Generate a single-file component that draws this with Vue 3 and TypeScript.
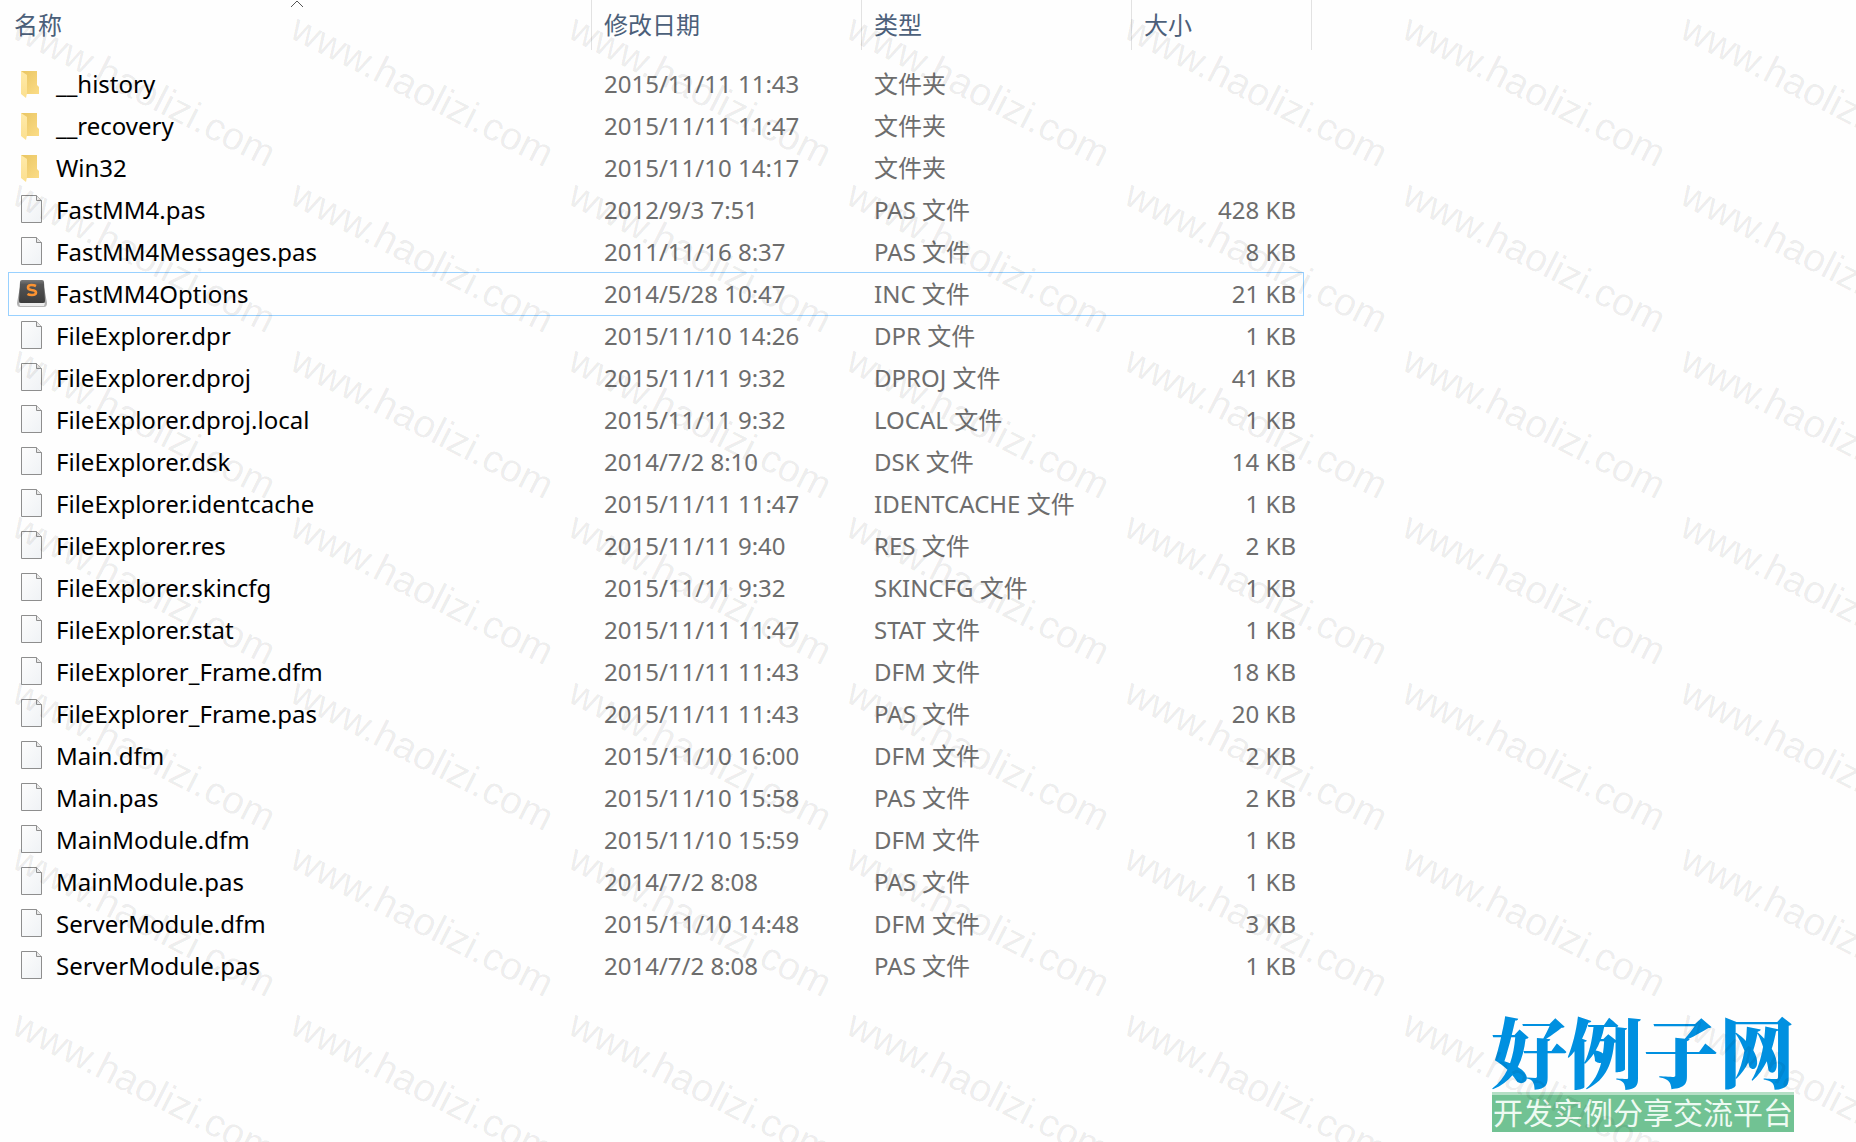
<script setup lang="ts">
type Kind = 'folder' | 'file' | 'sublime'

interface Entry {
  name: string
  date: string
  type: string
  size: string
  kind: Kind
}

function row(name: string, date: string, type: string, size = '', kind: Kind = 'file'): Entry {
  return { name, date, type, size, kind }
}

const entries: Entry[] = [
  row('__history', '2015/11/11 11:43', '文件夹', '', 'folder'),
  row('__recovery', '2015/11/11 11:47', '文件夹', '', 'folder'),
  row('Win32', '2015/11/10 14:17', '文件夹', '', 'folder'),
  row('FastMM4.pas', '2012/9/3 7:51', 'PAS 文件', '428 KB'),
  row('FastMM4Messages.pas', '2011/11/16 8:37', 'PAS 文件', '8 KB'),
  row('FastMM4Options', '2014/5/28 10:47', 'INC 文件', '21 KB', 'sublime'),
  row('FileExplorer.dpr', '2015/11/10 14:26', 'DPR 文件', '1 KB'),
  row('FileExplorer.dproj', '2015/11/11 9:32', 'DPROJ 文件', '41 KB'),
  row('FileExplorer.dproj.local', '2015/11/11 9:32', 'LOCAL 文件', '1 KB'),
  row('FileExplorer.dsk', '2014/7/2 8:10', 'DSK 文件', '14 KB'),
  row('FileExplorer.identcache', '2015/11/11 11:47', 'IDENTCACHE 文件', '1 KB'),
  row('FileExplorer.res', '2015/11/11 9:40', 'RES 文件', '2 KB'),
  row('FileExplorer.skincfg', '2015/11/11 9:32', 'SKINCFG 文件', '1 KB'),
  row('FileExplorer.stat', '2015/11/11 11:47', 'STAT 文件', '1 KB'),
  row('FileExplorer_Frame.dfm', '2015/11/11 11:43', 'DFM 文件', '18 KB'),
  row('FileExplorer_Frame.pas', '2015/11/11 11:43', 'PAS 文件', '20 KB'),
  row('Main.dfm', '2015/11/10 16:00', 'DFM 文件', '2 KB'),
  row('Main.pas', '2015/11/10 15:58', 'PAS 文件', '2 KB'),
  row('MainModule.dfm', '2015/11/10 15:59', 'DFM 文件', '1 KB'),
  row('MainModule.pas', '2014/7/2 8:08', 'PAS 文件', '1 KB'),
  row('ServerModule.dfm', '2015/11/10 14:48', 'DFM 文件', '3 KB'),
  row('ServerModule.pas', '2014/7/2 8:08', 'PAS 文件', '1 KB'),
]

const selected = 'FastMM4Options'
const tiles = 49
</script>

<template>
  <main class="explorer">
    <svg class="defs" width="0" height="0" aria-hidden="true">
      <defs>
        <linearGradient id="folderBack" x1="0" y1="0" x2="1" y2="1">
          <stop offset="0" stop-color="#e9c562" />
          <stop offset="1" stop-color="#fbdc86" />
        </linearGradient>
        <linearGradient id="folderFront" x1="0" y1="0" x2="0" y2="1">
          <stop offset="0" stop-color="#ffeaa9" />
          <stop offset="1" stop-color="#fbdf8f" />
        </linearGradient>
        <linearGradient id="paper" x1="0" y1="0" x2="1" y2="1">
          <stop offset="0" stop-color="#fdfdfd" />
          <stop offset="1" stop-color="#eff2f5" />
        </linearGradient>
        <linearGradient id="keyTop" x1="0" y1="0" x2="0" y2="1">
          <stop offset="0" stop-color="#7a7a7a" />
          <stop offset="0.2" stop-color="#565656" />
          <stop offset="1" stop-color="#3c3c3c" />
        </linearGradient>
        <linearGradient id="keySide" x1="0" y1="0" x2="0" y2="1">
          <stop offset="0" stop-color="#777" />
          <stop offset="1" stop-color="#b9b9b9" />
        </linearGradient>
      </defs>
    </svg>

    <table class="files">
      <colgroup>
        <col class="col-name" />
        <col class="col-mid" />
        <col class="col-mid" />
        <col class="col-size" />
      </colgroup>
      <thead>
        <tr>
          <th scope="col" aria-sort="ascending">
            <button type="button">名称</button>
            <svg class="caret" width="14" height="8" viewBox="0 0 14 8" aria-hidden="true">
              <path d="M1 7 L7 1 L13 7" fill="none" stroke="#555" stroke-width="1" />
            </svg>
          </th>
          <th scope="col"><button type="button">修改日期</button></th>
          <th scope="col"><button type="button">类型</button></th>
          <th scope="col"><button type="button">大小</button></th>
        </tr>
      </thead>
      <tbody>
        <tr v-for="e in entries" :key="e.name" :class="{ selected: e.name === selected }">
          <td class="name">
            <div class="label">
              <svg class="icon" width="32" height="32" viewBox="0 0 32 32" aria-hidden="true">
                <template v-if="e.kind === 'folder'">
                  <path d="M5 5 H21 V19 L23 21 V28 H9 Z" fill="url(#folderBack)" />
                  <path d="M5 5 L11 9 V27 L10 32 L5 28 Z" fill="url(#folderFront)" />
                </template>
                <template v-else-if="e.kind === 'file'">
                  <path d="M5.500 3.500 H20.500 L25.500 8.500 V30.500 H5.500 Z" fill="url(#paper)" stroke="#8e8e8e" />
                  <path d="M20.500 3.500 V8.500 H25.500" fill="#e8e8e8" stroke="#8e8e8e" />
                </template>
                <template v-else>
                  <path d="M5 6 L27 6 L31 27 Q31 31 28 31 H4 Q1 31 1 27 Z" fill="url(#keySide)" />
                  <path d="M3 27 H29 L28 30 H4 Z" fill="#ececec" />
                  <path d="M6 4 H26 Q28 4 28 6 L29 25 Q29 27 27 27 H5 Q3 27 3 25 L4 6 Q4 4 6 4 Z" fill="url(#keyTop)" />
                  <path d="M20 10 Q18 9 15.500 9 Q12 9 12 11.500 Q12 13.500 15.500 14 Q20 14.500 20 16.500 Q20 19 16 19 Q13 19 11.500 18" fill="none" stroke="#fb9332" stroke-width="2.600" />
                </template>
              </svg>
              <span>{{ e.name }}</span>
            </div>
          </td>
          <td>{{ e.date }}</td>
          <td>{{ e.type }}</td>
          <td class="size">{{ e.size }}</td>
        </tr>
      </tbody>
    </table>

    <div class="brand">
      <div class="brand-name">好例子网</div>
      <div class="brand-line">开发实例分享交流平台</div>
    </div>

    <div class="watermark" aria-hidden="true">
      <span v-for="n in tiles" :key="n">www.haolizi.com</span>
    </div>
  </main>
</template>

<style>
body {
  margin: 0;
  background: #fefefe;
}
</style>

<style scoped>
.explorer {
  position: relative;
  box-sizing: border-box;
  min-height: 100vh;
  padding-left: 9px;
  overflow: hidden;
  font-family: "Noto Sans", "Noto Sans CJK SC", sans-serif;
  font-size: 24px;
  line-height: 32px;
  color: #6d6d6d;
}

.defs {
  position: absolute;
}

.files {
  table-layout: fixed;
  width: 1294px;
  border-collapse: separate;
  border-spacing: 0;
}

.col-name {
  width: 583px;
}

.col-mid {
  width: 270px;
}

.col-size {
  width: 171px;
}

th {
  position: relative;
  height: 63px;
  padding: 0;
  vertical-align: top;
  text-align: left;
  font-weight: 400;
}

th::after {
  content: "";
  position: absolute;
  top: 0;
  right: 0;
  width: 1px;
  height: 50px;
  background: #e2e2e2;
}

th:last-child::after {
  right: -9px;
}

th button {
  display: block;
  width: 100%;
  height: 50px;
  padding: 0 0 0 12px;
  border: 0;
  background: none;
  font: inherit;
  text-align: left;
  color: #4c607a;
}

th:first-child button {
  padding-left: 5px;
}

.caret {
  position: absolute;
  top: 0;
  right: 288px;
}

td {
  height: 42px;
  padding: 0 0 0 12px;
  white-space: nowrap;
}

.name {
  padding-left: 7px;
  color: #000;
}

.label {
  display: flex;
  align-items: center;
  gap: 8px;
}

.icon {
  flex: none;
  margin-bottom: 4px;
}

.size {
  padding: 0 7px 0 0;
  text-align: right;
}

.selected {
  outline: 1px solid #99d1ff;
}

.brand {
  position: absolute;
  right: 62px;
  bottom: 10px;
  width: 302px;
  text-align: center;
  white-space: nowrap;
}

.brand-name {
  display: flex;
  justify-content: center;
  font-family: "Noto Serif CJK SC", "Noto Sans CJK SC", serif;
  font-size: 76px;
  font-weight: 900;
  line-height: 84px;
  color: #0090e0;
}

.brand-line {
  display: flex;
  justify-content: center;
  padding-bottom: 4px;
  border-top: 3px solid #b4dfc5;
  background: #71c293;
  font-family: "Noto Sans CJK SC", sans-serif;
  font-size: 30px;
  line-height: 33px;
  color: #eefaf2;
}

.watermark {
  position: absolute;
  top: 0;
  left: 0;
  display: grid;
  grid-template-columns: repeat(7, 278px);
  grid-auto-rows: 166px;
  pointer-events: none;
  font-family: "Liberation Sans", sans-serif;
  font-size: 39px;
  line-height: 40px;
  color: rgba(0, 0, 0, 0.08);
}

.watermark span {
  padding: 4px 0 0 10px;
  transform: rotate(27deg);
  transform-origin: 10px 37px;
  white-space: nowrap;
}
</style>
